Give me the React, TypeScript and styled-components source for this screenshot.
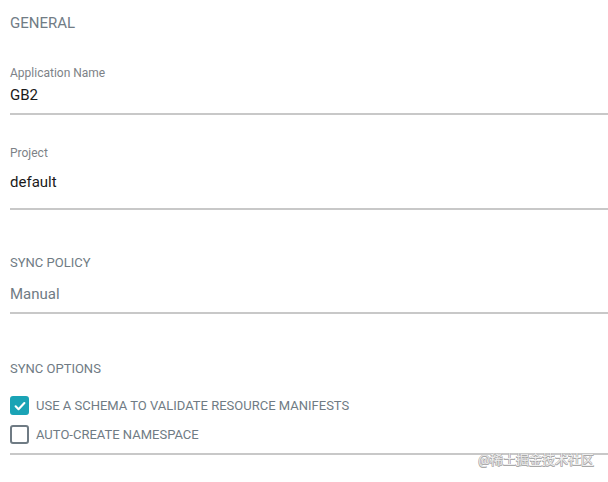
import styled, { createGlobalStyle } from "styled-components";

const GlobalStyle = createGlobalStyle`
  html, body {
    margin: 0;
    padding: 0;
    background: #fff;
  }
  body {
    font-family: Roboto, "Liberation Sans", "Noto Sans CJK SC", sans-serif;
  }
`;

const Page = styled.div`
  position: relative;
  width: 608px;
  height: 482px;
  overflow: hidden;
  padding: 13px 0 0 10px;
  box-sizing: border-box;
`;

const SectionTitle = styled.div<{ $gap?: number }>`
  font-size: 15px;
  line-height: 20px;
  color: #717c85;
  text-transform: uppercase;
  margin-top: ${(p) => p.$gap ?? 0}px;
`;

const SmallTitle = styled.div<{ $gap?: number }>`
  font-size: 13px;
  line-height: 16px;
  color: #6f7b84;
  text-transform: uppercase;
  margin-top: ${(p) => p.$gap ?? 0}px;
`;

const Field = styled.div<{ $top: number; $valueGap: number; $pad: number }>`
  margin-top: ${(p) => p.$top}px;
  padding-bottom: ${(p) => p.$pad}px;
  border-bottom: 2px solid #c8c8c8;
  display: flex;
  flex-direction: column;
  gap: ${(p) => p.$valueGap}px;
`;

const Label = styled.div`
  font-size: 12px;
  line-height: 16px;
  color: #7d8287;
`;

const Value = styled.div<{ $muted?: boolean }>`
  font-size: 15px;
  line-height: 20px;
  color: ${(p) => (p.$muted ? "#6f7b84" : "#1a1a1a")};
`;

const Options = styled.div`
  margin-top: 19px;
  padding-bottom: 9px;
  border-bottom: 2px solid #c8c8c8;
  display: flex;
  flex-direction: column;
  gap: 10px;
`;

const OptionRow = styled.label`
  display: flex;
  align-items: center;
  gap: 7px;
  font-size: 13px;
  color: #6f7b84;
`;

const Box = styled.span<{ $checked?: boolean }>`
  width: 19px;
  height: 19px;
  box-sizing: border-box;
  border-radius: 3px;
  border: 2px solid ${(p) => (p.$checked ? "#1aa3b5" : "#6f7b84")};
  background: ${(p) => (p.$checked ? "#1aa3b5" : "#fff")};
  display: flex;
  align-items: center;
  justify-content: center;
`;

const Watermark = styled.div`
  position: absolute;
  right: 14px;
  bottom: 14px;
  font-size: 13px;
  color: #eeeeee;
  text-shadow: 0.5px 0.5px 0 #a8a8a8, -0.5px -0.5px 0 #a8a8a8,
    0.5px -0.5px 0 #a8a8a8, -0.5px 0.5px 0 #a8a8a8;
`;

function Check({ checked }: { checked?: boolean }) {
  return (
    <Box $checked={checked}>
      {checked && (
        <svg width="14" height="14" viewBox="0 0 24 24">
          <path
            d="M4.5 12.5l5 5L19.5 7"
            fill="none"
            stroke="#fff"
            strokeWidth="3.6"
            strokeLinecap="round"
            strokeLinejoin="round"
          />
        </svg>
      )}
    </Box>
  );
}

export default function App() {
  return (
    <Page>
      <GlobalStyle />
      <SectionTitle>General</SectionTitle>
      <Field $top={32} $valueGap={4} $pad={8}>
        <Label>Application Name</Label>
        <Value>GB2</Value>
      </Field>
      <Field $top={30} $valueGap={11} $pad={16}>
        <Label>Project</Label>
        <Value>default</Value>
      </Field>
      <SmallTitle $gap={45}>Sync Policy</SmallTitle>
      <Field $top={13} $valueGap={0} $pad={8}>
        <Value $muted>Manual</Value>
      </Field>
      <SmallTitle $gap={47}>Sync Options</SmallTitle>
      <Options>
        <OptionRow>
          <Check checked />
          USE A SCHEMA TO VALIDATE RESOURCE MANIFESTS
        </OptionRow>
        <OptionRow>
          <Check />
          AUTO-CREATE NAMESPACE
        </OptionRow>
      </Options>
      <Watermark>@稀土掘金技术社区</Watermark>
    </Page>
  );
}
